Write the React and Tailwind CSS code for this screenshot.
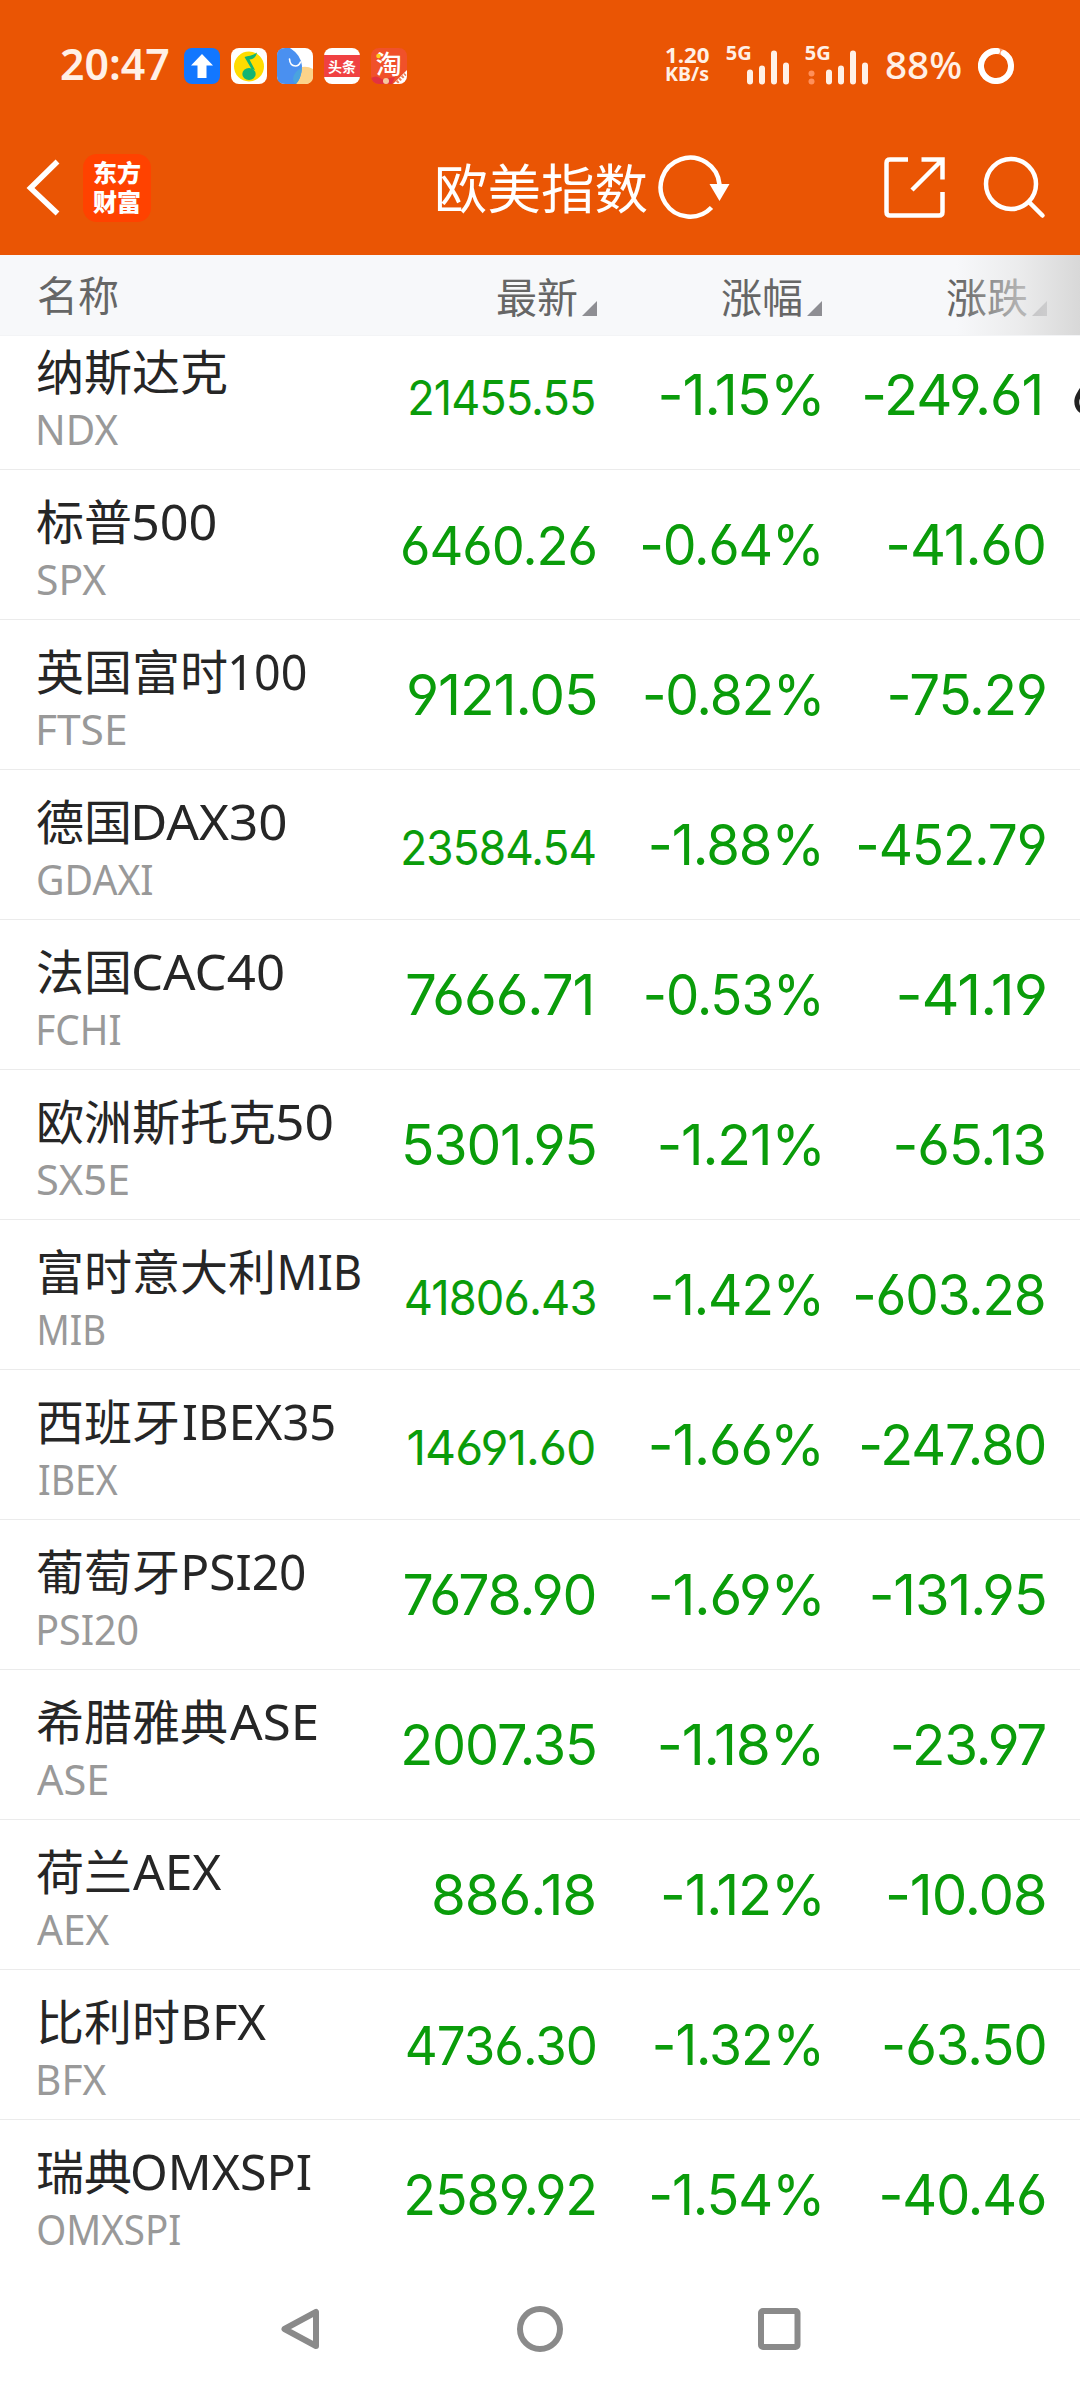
import { useLayoutEffect, useRef, useState } from "react";

const NUM = "font-['Inter','Noto_Sans',sans-serif] [font-feature-settings:'cv03','cv04','calt'_0]";
const LATIN = "font-['Noto_Sans',sans-serif]";
const CJK = "font-['Noto_Sans_CJK_SC',sans-serif]";

/* Text whose inked width is fitted to `width` pixels, anchored at one side. */
function Fit({ children, width, side = "left", className = "" }) {
  const ref = useRef(null);
  const [transform, setTransform] = useState("none");
  useLayoutEffect(() => {
    const el = ref.current;
    const css = getComputedStyle(el);
    const ctx = document.createElement("canvas").getContext("2d");
    ctx.font = `${css.fontWeight} ${css.fontSize} ${css.fontFamily}`;
    const m = ctx.measureText(children);
    const before = -m.actualBoundingBoxLeft;
    const after = m.width - m.actualBoundingBoxRight + (parseFloat(css.letterSpacing) || 0);
    const s = width / (el.offsetWidth - before - after);
    const shift = side === "left" ? -before * s : after * s;
    setTransform(`translateX(${shift}px) scaleX(${s})`);
  }, [children, width, side]);
  return (
    <span
      ref={ref}
      className={`inline-block whitespace-nowrap ${side === "left" ? "origin-left" : "origin-right"} ${className}`}
      style={{ transform }}
    >
      {children}
    </span>
  );
}

/* cjk, latin, [latin left, right], code, [code left, right], then three values with [left, right] */
const rows = [
  ["纳斯达克", "", [0, 0], "NDX", [38.5, 118], ["21455.55", 410, 595, "s"], ["-1.15%", 660.5], ["-249.61", 864.7, 1039.5]],
  ["标普", "500", [134, 216], "SPX", [37.5, 106], ["6460.26", 403, 595, "m"], ["-0.64%", 642], ["-41.60", 888.8, 1044.5]],
  ["英国富时", "100", [231, 306], "FTSE", [39, 125], ["9121.05", 409, 595, "l"], ["-0.82%", 644.7], ["-75.29", 888.8, 1044.5]],
  ["德国", "DAX30", [134, 286], "GDAXI", [38, 153], ["23584.54", 403, 595, "s"], ["-1.88%", 650.7], ["-452.79", 857.7, 1044.5]],
  ["法国", "CAC40", [134, 283], "FCHI", [39, 121], ["7666.71", 407, 590, "l"], ["-0.53%", 645.7], ["-41.19", 898.7, 1045]],
  ["欧洲斯托克", "50", [278, 332], "SX5E", [38, 128], ["5301.95", 405, 595, "l"], ["-1.21%", 659.7], ["-65.13", 896, 1044.5]],
  ["富时意大利", "MIB", [280, 360], "MIB", [39.5, 104], ["41806.43", 405.7, 595, "s"], ["-1.42%", 652.7], ["-603.28", 855, 1044]],
  ["西班牙", "IBEX35", [184, 334], "IBEX", [39, 118], ["14691.60", 409, 594.5, "s"], ["-1.66%", 650.7], ["-247.80", 860.7, 1044.5]],
  ["葡萄牙", "PSI20", [184, 305], "PSI20", [39, 137], ["7678.90", 404, 594.5, "l"], ["-1.69%", 650.7], ["-131.95", 871.7, 1045]],
  ["希腊雅典", "ASE", [230, 316], "ASE", [37, 107], ["2007.35", 404, 595, "l"], ["-1.18%", 659.7], ["-23.97", 892.7, 1045]],
  ["荷兰", "AEX", [133, 222], "AEX", [37, 110], ["886.18", 434.5, 594.5, "l"], ["-1.12%", 662], ["-10.08", 888, 1045]],
  ["比利时", "BFX", [184, 267], "BFX", [39, 107], ["4736.30", 407.7, 595, "m"], ["-1.32%", 654.7], ["-63.50", 884, 1045]],
  ["瑞典", "OMXSPI", [133, 310], "OMXSPI", [38, 180], ["2589.92", 406.5, 594.5, "l"], ["-1.54%", 651], ["-40.46", 881.5, 1045]],
];

const sizes = { s: "text-[47.500px]", m: "text-[53.500px]", l: "text-[56.500px]" };

function Value({ text, left, right, size = "l", edge, className }) {
  return (
    <div className={`flex shrink-0 justify-end text-[#0a9c0a] ${className}`}>
      <div className="flex" style={{ marginRight: edge - right }}>
        <Fit width={right - left} side="right" className={`${NUM} leading-[60px] tracking-[-0.02em] ${sizes[size]}`}>
          {text}
        </Fit>
      </div>
    </div>
  );
}

function Row({ row, index }) {
  const [cjk, latin, lx, code, cx, a, b, c] = row;
  const cjkEnd = 36 + cjk.length * 48;
  return (
    <div className={`flex h-[150px] w-full overflow-hidden border-b ${index === 12 ? "border-transparent" : "border-[#ebebeb]"}`}>
      <div className="w-[380px] shrink-0 pt-[19px] pl-[36px]">
        <div className="flex h-[60px] items-baseline text-[#262626]">
          <span className={`${CJK} text-[48px] leading-[60px] whitespace-nowrap`}>{cjk}</span>
          {latin && (
            <span style={{ marginLeft: lx[0] - cjkEnd }}>
              <Fit width={lx[1] - lx[0]} className={`${LATIN} text-[50px] leading-[60px]`}>{latin}</Fit>
            </span>
          )}
        </div>
        <div className="mt-[5px] flex h-[50px] text-[#999999]">
          <span style={{ marginLeft: cx[0] - 36 }}>
            <Fit width={cx[1] - cx[0]} className={`${LATIN} text-[41.5px] leading-[50px]`}>{code}</Fit>
          </span>
        </div>
      </div>
      <div className="flex h-[106px] items-baseline pt-[45px]">
        <Value text={a[0]} left={a[1]} right={a[2]} size={a[3]} edge={596} className="w-[216px]" />
        <Value text={b[0]} left={b[1]} right={820} edge={820} className="w-[224px]" />
        <Value text={c[0]} left={c[1]} right={c[2]} edge={1046} className="w-[226px]" />
        {index === 0 && (
          <span className={`${NUM} ml-[25px] w-[10px] text-[56px] leading-[60px] text-[#222222]`}>6</span>
        )}
      </div>
    </div>
  );
}

function HeadCell({ children, className }) {
  return (
    <div className={`flex items-end justify-end text-[#666666] ${className}`}>
      <span className={`${CJK} text-[41px] leading-[60px]`}>{children}</span>
      <svg className="mb-[9px] ml-1 h-[15px] w-[15px]" viewBox="0 0 15 15">
        <path d="M15 0V15H0Z" fill="#8e8e93" />
      </svg>
    </div>
  );
}

function Signal({ dots }) {
  return (
    <div className="relative h-[40px] w-[64px]">
      <span className={`${LATIN} absolute -top-[3px] left-0 text-[20px] leading-5 font-bold`}>5G</span>
      <svg className="h-[40px] w-[64px]" viewBox="0 0 64 40" stroke="#fff0e6" strokeWidth="6" strokeLinecap="round">
        <path d="M24 26.5V35.5M36 22.5V35.5M48 7.5V35.5M60 19.5V35.5" />
        {dots && (
          <g stroke="none" fill="#ff8f5a">
            <circle cx="6.500" cy="27.500" r="3" />
            <circle cx="6.500" cy="35.500" r="3" />
          </g>
        )}
      </svg>
    </div>
  );
}

function AppIcons() {
  return (
    <div className="flex gap-[10.7px]">
      <svg className="h-9 w-9" viewBox="0 0 36 36">
        <rect width="36" height="36" rx="8" fill="#1277ff" />
        <path d="M18 6L29 17.500H22.500V30H13.500V17.500H7Z" fill="#fff" />
      </svg>
      <svg className="h-9 w-9" viewBox="0 0 36 36">
        <rect width="36" height="36" rx="8" fill="#fff" />
        <circle cx="18" cy="18.500" r="15" fill="#ffdc00" />
        <path d="M26 4.500C22 8 17 8 13.500 9L20.500 21L24 22L18.500 11.500C22 11 25 9.500 26 4.500Z" fill="#12b573" />
        <ellipse cx="18" cy="26" rx="6.700" ry="6" fill="#12b573" />
      </svg>
      <svg className="h-9 w-9" viewBox="0 0 36 36">
        <rect width="36" height="36" rx="8" fill="#fff" />
        <path d="M22 20Q29 17 36 21V28Q36 36 28 36H19Z" fill="#fcd389" />
        <path d="M8 0H13Q24 7 25 18Q25 29 19 36H8Q0 36 0 28V8Q0 0 8 0Z" fill="#4a90f0" />
        <path d="M24 20Q16 25 16 31Q16 34 19 36Q24 31 25 20Z" fill="#4aa3df" />
        <path d="M12.500 11Q13 18 18.500 18Q22 18 23.500 14" fill="none" stroke="#fff" strokeWidth="1.600" strokeLinecap="round" />
      </svg>
      <div className="flex h-9 w-9 flex-col justify-center rounded-lg bg-white">
        <div className={`${CJK} flex h-[22px] items-center justify-center bg-[#f04142] text-[14px] leading-none font-bold text-white`}>
          头条
        </div>
      </div>
      <div className="relative h-9 w-9 overflow-hidden rounded-lg bg-[#f0512a]">
        <span className={`${CJK} absolute top-[2px] left-[5px] text-[26px] leading-[26px] font-medium text-white`}>淘</span>
        <svg className="absolute inset-0 h-9 w-9" viewBox="0 0 36 36">
          <circle cx="7.500" cy="8" r="2.300" fill="#ffd21f" />
          <path d="M0 30Q5 27 9 30T18 30L24 29L21 36H0Z" fill="#e2323f" />
          <circle cx="15" cy="33" r="3" fill="#f6c9a0" />
          <path d="M36 22V36H22Z" fill="#fff" />
          <path d="M26 34.500L34.500 26" stroke="#e9825b" strokeWidth="3" strokeDasharray="2 1.500" />
        </svg>
      </div>
    </div>
  );
}

function StatusBar() {
  return (
    <div className="flex h-[131px] items-center pl-[61px] text-[#fff0e6]">
      <div className="w-[123px] pb-[3px]">
        <Fit width={107} className={`${LATIN} text-[43px] leading-[60px] font-semibold`}>20:47</Fit>
      </div>
      <AppIcons />
      <div className={`${LATIN} ml-[259px] w-[60px] pb-[4px] font-bold`}>
        <div className="flex">
          <Fit width={43} className="text-[22px] leading-5">1.20</Fit>
        </div>
        <div className="flex">
          <Fit width={43} className="text-[20px] leading-5">KB/s</Fit>
        </div>
      </div>
      <Signal />
      <div className="w-[15px]" />
      <Signal dots />
      <div className="ml-[17px] w-[92px] pb-[3px]">
        <Fit width={75} className={`${LATIN} text-[38px] leading-[60px] font-medium`}>88%</Fit>
      </div>
      <svg className="h-9 w-9" viewBox="0 0 36 36" fill="none" strokeWidth="6">
        <circle cx="18" cy="18" r="15" stroke="#ff9c6b" />
        <path d="M25.700 5.100A15 15 0 1 1 19 3" stroke="#fff" strokeLinecap="round" />
      </svg>
    </div>
  );
}

function TitleBar() {
  return (
    <div className="flex h-[124px] pt-5">
      <svg className="mt-[6px] ml-6 h-[60px] w-[40px]" viewBox="0 0 40 60" fill="none" stroke="#fff" strokeWidth="5.500">
        <path d="M33.500 5L6.500 31.500L33.500 57" transform="translate(0 -.500)" />
      </svg>
      <div className={`${CJK} mt-[3px] ml-[19px] h-[68px] w-[68px] rounded-[14px] bg-[#ff4200] pt-[3px] text-center text-[24px] leading-[29px] font-black text-white`}>
        <div>东方</div>
        <div>财富</div>
      </div>
      <div className={`${CJK} ml-[283px] pt-[5px] text-[53.500px] leading-[60px] whitespace-nowrap text-white`}>
        欧美指数
      </div>
      <svg className="mt-[3px] ml-[8.500px] h-[68px] w-[76px]" viewBox="0 0 76 68" fill="none" stroke="#fff" strokeWidth="4.500">
        <path d="M62.500 30A29.500 29.500 0 1 0 54.500 53" transform="translate(0 .500)" />
        <path d="M52.500 30H72.500L62.500 47Z" fill="#fff" stroke="none" />
      </svg>
      <svg className="mt-[5px] ml-[150px] h-[64px] w-[64px]" viewBox="0 0 64 64" fill="none" stroke="#fff" strokeWidth="4.500">
        <path d="M25 3.500H7Q3.500 3.500 3.500 7V56Q3.500 59.500 7 59.500H56Q59.500 59.500 59.500 56V36M38.500 3.500H59.500V23.500M58 5L29 34" />
      </svg>
      <svg className="mt-[4px] ml-[36px] h-[66px] w-[66px]" viewBox="0 0 66 66" fill="none" stroke="#fff" strokeWidth="4.500">
        <circle cx="28" cy="29" r="25" />
        <path d="M46 47L59.500 60.500" strokeLinecap="round" />
      </svg>
    </div>
  );
}

export default function App() {
  return (
    <div className="flex h-[2392px] w-[1080px] flex-col overflow-hidden bg-white">
      <div className="h-[255px] shrink-0 bg-[#ea5504]">
        <StatusBar />
        <TitleBar />
      </div>
      <div className="relative flex h-[81px] shrink-0 border-b border-[#f3f4f6] bg-[#f7f8fa]">
        <div className={`${CJK} w-[380px] pt-[8px] pl-[37px] text-[41px] leading-[60px] text-[#666666]`}>名称</div>
        <HeadCell className="w-[217px] pb-[10px]">最新</HeadCell>
        <HeadCell className="w-[225px] pb-[10px]">涨幅</HeadCell>
        <HeadCell className="w-[225px] pb-[10px]">涨跌</HeadCell>
        <div className="absolute inset-y-0 right-0 w-[124px] bg-linear-to-r from-[#e4e4e4]/0 via-[#e4e4e4]/60 to-[#d8d8d8]" />
      </div>
      <div className="h-[1934px] shrink-0 overflow-hidden">
        <div className="-mt-4 flex flex-col">
          {rows.map((row, i) => (
            <Row key={row[3]} row={row} index={i} />
          ))}
        </div>
      </div>
      <div className="flex items-center pt-[35px] pl-[278px]">
        <svg className="h-12 w-12" viewBox="0 0 48 48" fill="none" stroke="#8a8a8a" strokeWidth="6" strokeLinejoin="round">
          <path d="M38 7V41L6.500 24Z" />
        </svg>
        <svg className="ml-[190px] h-12 w-12" viewBox="0 0 48 48" fill="none" stroke="#8a8a8a" strokeWidth="6">
          <circle cx="24" cy="24" r="20" />
        </svg>
        <svg className="ml-[192px] h-12 w-12" viewBox="0 0 48 48" fill="none" stroke="#8a8a8a" strokeWidth="6">
          <rect x="5" y="6" width="36.500" height="36" rx="2" />
        </svg>
      </div>
    </div>
  );
}
